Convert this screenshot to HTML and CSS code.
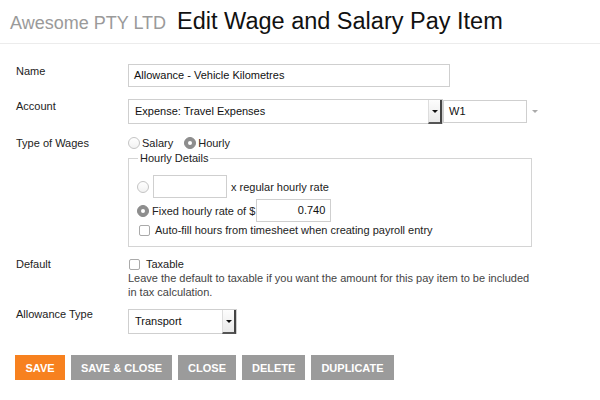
FILE: index.html
```html
<!DOCTYPE html>
<html>
<head>
<meta charset="utf-8">
<link rel="stylesheet" href="styles.css">
</head>
<body>
<header class="top">
  <span class="company">Awesome PTY LTD</span>
  <h1 class="title">Edit Wage and Salary Pay Item</h1>
</header>
<main class="form">
  <div class="row row-name">
    <div class="label">Name</div>
    <div class="control"><div class="input name-input">Allowance - Vehicle Kilometres</div></div>
  </div>
  <div class="row row-account">
    <div class="label">Account</div>
    <div class="control inline">
      <div class="select account-select"><span class="sel-text">Expense: Travel Expenses</span><span class="sel-btn"><i class="tri"></i></span></div>
      <div class="input w1-input">W1</div>
      <span class="mini-tri"></span>
    </div>
  </div>
  <div class="row row-type">
    <div class="label">Type of Wages</div>
    <div class="control">
      <div class="radios">
        <span class="radio"></span><span class="rlabel">Salary</span>
        <span class="radio on"></span><span class="rlabel">Hourly</span>
      </div>
      <fieldset class="details">
        <legend>Hourly Details</legend>
        <div class="drow">
          <span class="radio"></span>
          <div class="input mult-input"></div>
          <span class="dtext">x regular hourly rate</span>
        </div>
        <div class="drow drow2">
          <span class="radio on"></span>
          <span class="dtext tight">Fixed hourly rate of $</span>
          <div class="input rate-input">0.740</div>
        </div>
        <div class="drow check-row">
          <span class="check"></span>
          <span class="dtext ctext2">Auto-fill hours from timesheet when creating payroll entry</span>
        </div>
      </fieldset>
    </div>
  </div>
  <div class="row row-default">
    <div class="label">Default</div>
    <div class="control">
      <div class="taxable"><span class="check"></span><span class="ctext">Taxable</span></div>
      <p class="help">Leave the default to taxable if you want the amount for this pay item to be included in tax calculation.</p>
    </div>
  </div>
  <div class="row row-allow">
    <div class="label">Allowance Type</div>
    <div class="control">
      <div class="select allow-select"><span class="sel-text">Transport</span><span class="sel-btn"><i class="tri"></i></span></div>
    </div>
  </div>
  <div class="buttons">
    <button class="btn primary">SAVE</button>
    <button class="btn">SAVE &amp; CLOSE</button>
    <button class="btn">CLOSE</button>
    <button class="btn">DELETE</button>
    <button class="btn dup">DUPLICATE</button>
  </div>
</main>
</body>
</html>
```
FILE: styles.css
```css
* { box-sizing: border-box; }
html, body { margin: 0; padding: 0; background: #fff; }
body {
  font-family: "Liberation Sans", Arial, Helvetica, sans-serif;
  font-size: 11px;
  color: #222;
  width: 600px;
  height: 400px;
  overflow: hidden;
}
.top {
  height: 44px;
  border-bottom: 1px solid #ececec;
  display: flex;
  align-items: baseline;
  padding: 8px 0 0 10px;
}
.company {
  font-size: 18px;
  color: #9a9a9a;
  margin-right: 11px;
}
.title {
  margin: 0;
  font-size: 23.5px;
  font-weight: normal;
  color: #111;
}
.form { padding: 0 0 0 16px; }
.row { display: flex; }
.label { width: 112px; line-height: 14px; color: #222; flex: none; }
.control { flex: none; }
.inline { display: flex; align-items: center; }

.input {
  border: 1px solid #cfcfcf;
  background: #fff;
  height: 23px;
  line-height: 21px;
  padding: 0 5px;
  color: #111;
}
.row-name { margin-top: 20px; }
.name-input { width: 322px; }

.row-account { margin-top: 12px; }
.select {
  display: flex;
  border: 1px solid #cfcfcf;
  background: #fff;
  height: 25px;
}
.sel-text { flex: 1; line-height: 23px; padding-left: 6px; color: #111; }
.sel-btn {
  width: 14px;
  height: 24px;
  background: linear-gradient(#fdfdfd, #e9e9e9);
  border-left: 1px solid #ddd;
  border-right: 2px solid #444;
  border-bottom: 2px solid #555;
  display: flex;
  align-items: center;
  justify-content: center;
}
.tri {
  display: block;
  width: 0; height: 0;
  border-left: 3px solid transparent;
  border-right: 3px solid transparent;
  border-top: 3px solid #111;
}
.account-select { width: 315px; }
.w1-input { width: 84px; }
.mini-tri {
  margin-left: 5px;
  width: 0; height: 0;
  border-left: 3px solid transparent;
  border-right: 3px solid transparent;
  border-top: 3px solid #aaa;
}

.row-type { margin-top: 12px; }
.radios { display: flex; align-items: center; height: 14px; }
.radio {
  width: 12px; height: 12px;
  border-radius: 50%;
  border: 1px solid #c4c4c4;
  background: linear-gradient(#fff, #f2f2f2);
  flex: none;
  position: relative;
}
.radio.on {
  background: #8e8e8e;
  border-color: #8a8a8a;
}
.radio.on::after {
  content: "";
  position: absolute;
  left: 3px; top: 3px;
  width: 4px; height: 4px;
  border-radius: 50%;
  background: #fff;
}
.rlabel { margin-left: 2px; margin-right: 11px; color: #222; }

.details {
  margin: 1px 0 0 0;
  padding: 10px 8px 9px 8px;
  width: 404px;
  border: 1px solid #d4d4d4;
}
.details legend {
  padding: 0 2px;
  margin-left: 1px;
  color: #222;
  line-height: 14px;
}
.drow { display: flex; align-items: center; height: 23px; }
.drow2 { margin-top: 1px; }
.mult-input { width: 74px; margin-left: 4px; }
.dtext { margin-left: 4px; color: #222; }
.dtext.tight { margin-left: 3px; }
.rate-input { width: 75px; text-align: right; margin-left: 1px; }
.check-row { height: 14px; margin-top: 1px; }
.check {
  width: 11px; height: 11px;
  border: 1px solid #aaa;
  border-radius: 2px;
  background: #fff;
  flex: none;
  margin-left: 2px;
}
.ctext2 { margin-left: 5px; }

.row-default { margin-top: 10px; }
.taxable { display: flex; align-items: center; height: 14px; }
.taxable .check { margin-left: 1px; }
.ctext { margin-left: 6px; color: #222; }
.help {
  margin: 0;
  width: 410px;
  line-height: 14px;
  color: #444;
}

.row-allow { margin-top: 8px; }
.allow-select { width: 109px; margin-top: 2px; }

.buttons { display: flex; margin-top: 21px; margin-left: -1px; }
.btn {
  border: none;
  background: #9b9b9b;
  color: #fff;
  font-family: "Liberation Sans", Arial, Helvetica, sans-serif;
  font-weight: bold;
  font-size: 11px;
  height: 25px;
  padding: 0 10px;
  margin-right: 6px;
}
.btn.primary { background: #f7811f; width: 50px; padding: 0; }
```
